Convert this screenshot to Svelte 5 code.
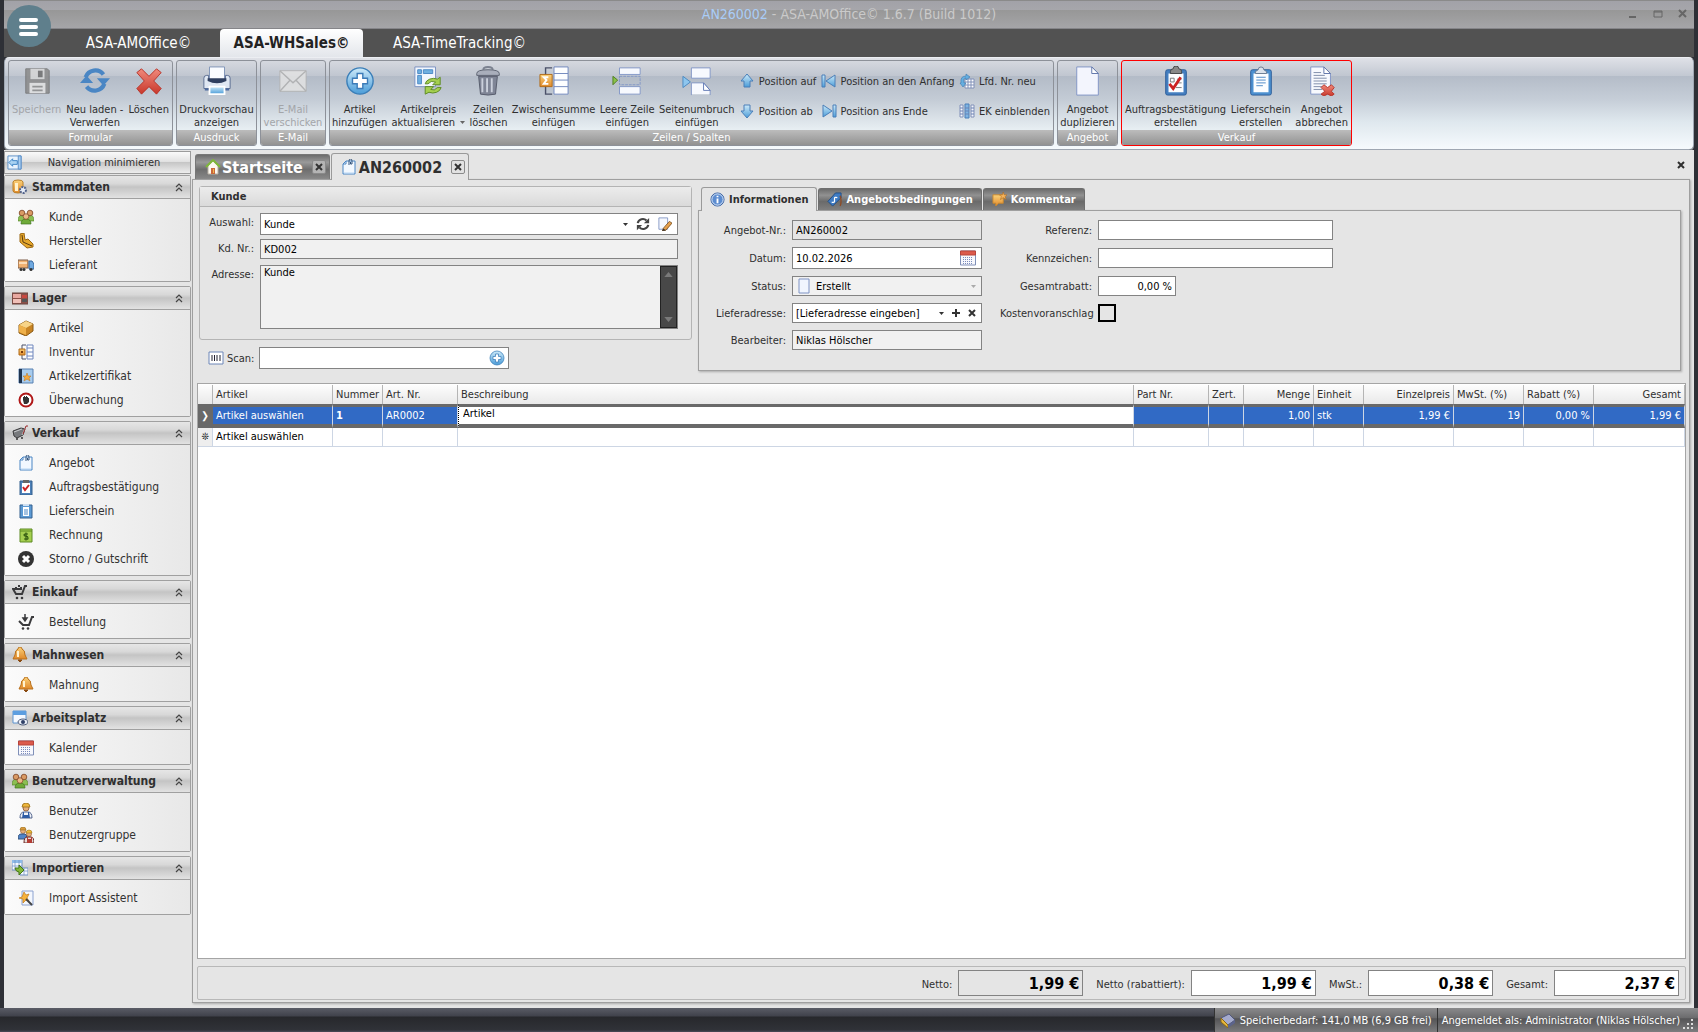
<script lang="ts">
	type RibbonButton = { icon: string; lines: string[]; disabled?: boolean; menu?: boolean };
	type Entry = { icon: string; label: string };

	/** Inhalt der 32er Symbole (Ribbon) */
	const large: Record<string, string> = {
		save: '<path d="M4 3h23l2 2v24H4z" fill="#8a8a8a" stroke="#707070"/><path d="M9 3h15v11H9z" fill="#d6d6d6"/><path d="M17 5h5v7h-5z" fill="#6d6d6d"/><path d="M8 18h17v11H8z" fill="#e2e2e2"/><path d="M11 22h11M11 26h11" stroke="#8c8c8c" stroke-width="2"/>',
		reload: '<path d="M6 12a11 11 0 0 1 19-3" fill="none" stroke="#4a86c4" stroke-width="4.500"/><path d="M26 19a11 11 0 0 1-19 3" fill="none" stroke="#4a86c4" stroke-width="4.500"/><path d="M18 13h14l-7 8zM14 18H0l7-8z" fill="#4a86c4"/>',
		delete: '<path d="M8 3l8 8 8-8 5 4-8 9 8 8-5 6-8-8-8 8-5-6 8-8-8-9z" fill="url(#red)" stroke="#b8332a" stroke-linejoin="round"/>',
		print: '<path d="M8 1h16v14H8z" fill="#fafcff" stroke="#7f93b8"/><path d="M2 13q0-3 3-3h2v5q9 5 18 0v-5h2q3 0 3 3v11H2z" fill="#dfe7f2" stroke="#5a6c90"/><path d="M6 13h20v3q-10 5-20 0z" fill="#2f3f5f"/><path d="M8 22h16v8H8z" fill="url(#blue)" stroke="#fff" stroke-width="2"/><path d="M3 25h4M25 25h4" stroke="#4c6aa0" stroke-width="2"/>',
		mail: '<path d="M2 5h28v22H2z" fill="#e3e3e3" stroke="#b0b0b0"/><path d="M2 5l14 13L30 5M2 27l11-12M30 27L19 15" fill="none" stroke="#b0b0b0" stroke-width="1.500"/>',
		add: '<circle cx="16" cy="16" r="14" fill="url(#blue)" stroke="#3c7fb8" stroke-width="1.500"/><path d="M13 8h6v5h5v6h-5v5h-6v-5H8v-6h5z" fill="#fff" stroke="#3c7cb8" stroke-width="1.500"/>',
		price: '<path d="M2 1h22v21H2z" fill="#f2f6fd" stroke="#7a90c0"/><path d="M5 4h4v4H5zM11 4h10v4H11zM5 10h4v9H5z" fill="#70b0e0" stroke="#4a88c4"/><path d="M13 19a9 7 0 0 1 13-5l3-2v8h-8l3-3q-5-2-8 2zM30 23a9 7 0 0 1-13 5l-4 2v-8h9l-3 3q4 2 7-2z" fill="#a5cf50" stroke="#5c8a22"/>',
		trash: '<path d="M11 4q0-3 5-3t5 3" fill="none" stroke="#7c8290" stroke-width="2"/><path d="M4 8q0-4 12-4t12 4v2H4z" fill="#a9aebb" stroke="#5c6270"/><path d="M6 11h20l-2 19q-8 2-16 0z" fill="#7f8596" stroke="#555b6b"/><path d="M10 13v15M15 13v15M20 13v15" stroke="#cbd0dc" stroke-width="2"/>',
		subtotal: '<path d="M14 2H7v28h7" fill="none" stroke="#4a5068" stroke-width="1.500"/><path d="M16 1h15v29H16z" fill="#fdfeff" stroke="#6f86bd"/><path d="M16 8h15M16 15h15M16 22h15" stroke="#6f86bd"/><path d="M1 9h13v13H1z" fill="url(#gold)" stroke="#b06a18"/><path d="M10 12H5l3 3-3 4h5" fill="none" stroke="#fff" stroke-width="2"/>',
		blankline: '<path d="M8 2h22v7H8zM8 22h22v8H8z" fill="#f7f9fe" stroke="#8296c6"/><path d="M8 11h22v9H8z" fill="none" stroke="#8296c6" stroke-dasharray="3 1"/><path d="M1 11l5 4-5 5z" fill="#8bc34a" stroke="#4f7d1f"/>',
		pagebreak: '<path d="M10 2h20v11H10z" fill="#f7f9fe" stroke="#8296c6"/><path d="M10 30V18h13l7 8v4z" fill="#f7f9fe"/><path d="M10 31V18h13l7 8v5" fill="none" stroke="#8296c6"/><path d="M23 18v8h7z" fill="#fff" stroke="#5f78b4"/><path d="M1 11l8 6-8 6z" fill="#8ec6ee" stroke="#4a88c0"/>',
		duplicate: '<path d="M4 1h16l7 7v23H4z" fill="#f3f5fd" stroke="#7f93c4"/><path d="M20 1v7h7z" fill="#fff" stroke="#5d72a8"/>',
		confirm: '<rect x="5" y="4" width="22" height="27" rx="2" fill="#457fc0" stroke="#2c5c97"/><path d="M8 8h16v20H8z" fill="#fcfdff"/><path d="M10 6q0-3 3-3 0-3 3-3t3 3q3 0 3 3v2H10z" fill="#888" stroke="#444"/><path d="M10 13h4v4h-4zM17 14h5M17 18h5M16 23h6" fill="none" stroke="#777"/><path d="M9 19l4 5 8-12" fill="none" stroke="#c22" stroke-width="3"/>',
		delivery: '<rect x="5" y="4" width="22" height="27" rx="2" fill="#4d90d0" stroke="#2c5c97"/><path d="M8 8h16v20H8z" fill="#fcfdff"/><path d="M10 6l3-2q0-3 3-3t3 3l3 2v2H10z" fill="#dce3ec" stroke="#6b7a90"/><path d="M11 12h10M11 15h10M11 18h10M11 21h7" stroke="#4a86c4"/>',
		cancel: '<path d="M4 1h14l7 7v22H4z" fill="#f7f9fe" stroke="#7f93c4"/><path d="M18 1v7h7z" fill="#fff" stroke="#5d72a8"/><path d="M7 7h8M7 10h12M7 13h14M7 16h14M7 19h14M7 22h9M7 25h9" stroke="#7c8aa8"/><path d="M18 20l4 3 4-3 3 3-3 4 3 3-3 2-4-2-4 2-3-2 4-3-4-4z" fill="url(#red)" stroke="#b8332a"/>'
	};

	/** Inhalt der 16er Symbole (Navigation, Felder, Reiter) */
	const small: Record<string, string> = {
		up: '<path d="M8 1l6 7h-3v6H5V8H2z" fill="url(#blue)" stroke="#4a7fb8"/>',
		down: '<path d="M8 15l6-7h-3V2H5v6H2z" fill="url(#blue)" stroke="#4a7fb8"/>',
		first: '<path d="M1 2h3v12H1zM14 2v12L5 8z" fill="url(#blue)" stroke="#4a7fb8"/>',
		last: '<path d="M12 2h3v12h-3zM2 2v12l9-6z" fill="url(#blue)" stroke="#4a7fb8"/>',
		renumber: '<path d="M6 6h9v9H6z" fill="#fff" stroke="#8090b8"/><path d="M6 9h9M6 12h9M9 6v9M12 6v9" stroke="#8090b8"/><path d="M2 10q-1-7 5-7V1l4 3-4 3V5q-3 0-2 5h2l-3 4-3-4z" fill="#65aee0" stroke="#3a78b0" stroke-width=".6"/>',
		columns: '<path d="M1 2h3v12H1zM12 2h3v12h-3z" fill="#f4f6fc" stroke="#8090b8"/><path d="M6 1h4v14H6z" fill="#7fb4e2" stroke="#4a7fb8"/><path d="M1 5h3M1 8h3M1 11h3M6 5h4M6 8h4M6 11h4M12 5h3M12 8h3M12 11h3" stroke="#6c83b4"/>',
		minimize: '<path d="M1 1h14v14H1z" fill="#e9f3fd" stroke="#5b8fc8"/><path d="M12 1h3v14h-3z" fill="#a7cdf0" stroke="#5b8fc8"/><path d="M2 8l4-4v2h5v4H6v2z" fill="#a9d2f2" stroke="#3b82c4"/>',
		master: '<path d="M1 3q0-2 5-2t5 2v9q0 2-5 2t-5-2z" fill="url(#gold)" stroke="#b8802a"/><path d="M3 4h3v8H3z" fill="#fff2cc"/><circle cx="11" cy="11" r="3" fill="#e7edf8" stroke="#53648c" stroke-width="2" stroke-dasharray="2 1"/>',
		people: '<path d="M0 12q0-6 4-6t4 6zM16 12q0-6-4-6t-4 6z" fill="#8cbf52" stroke="#4c7c24" stroke-width=".6"/><circle cx="4" cy="4" r="2.800" fill="#d99a64" stroke="#7c4424" stroke-width=".8"/><circle cx="12" cy="4" r="2.800" fill="#d99a64" stroke="#7c4424" stroke-width=".8"/><path d="M3 15q0-5 5-5t5 5z" fill="#6faa38" stroke="#3f7420" stroke-width=".7"/><circle cx="8" cy="7.500" r="2.800" fill="#eab888" stroke="#8c4c2c" stroke-width=".8"/>',
		maker: '<path d="M2 1l4-1 1 7 3-1 5 5v3l-6 1L2 9z" fill="#e6a82c" stroke="#9a6612"/><path d="M4 2l1 7 9 4" stroke="#5c3c10" fill="none"/>',
		truck: '<path d="M0 3h10v8H0z" fill="#f0b070" stroke="#7c5c48"/><path d="M1 5h8v2H1z" fill="#fbdcb8"/><path d="M11 4h3l2 3v5h-5z" fill="#6fa9e0" stroke="#37679c"/><circle cx="3" cy="12.500" r="1.500" fill="#333"/><circle cx="6" cy="12.500" r="1.500" fill="#333"/><circle cx="13" cy="12.500" r="1.500" fill="#333"/>',
		store: '<path d="M0 3h16v11H0z" fill="#8c5048" stroke="#6c4640"/><path d="M1 4h8v4H1z" fill="#e8a8a0"/><path d="M1 9h8v4H1z" fill="#f0c0b8"/><path d="M10 5h5v3h-5z" fill="#c84840"/><path d="M10 9h5v3h-5z" fill="#555"/>',
		box: '<path d="M1 5l7-4 7 3v7l-7 5-7-3z" fill="#c88424" stroke="#8a5a14"/><path d="M1 5l7-4 7 3-7 4z" fill="#f7d488"/><path d="M8 8v7l-7-3V5z" fill="#eeb04a"/>',
		stock: '<path d="M8 1H4v14h4" fill="none" stroke="#4a5068"/><path d="M9 1h6v14H9z" fill="#fff" stroke="#6f86bd"/><path d="M9 4h6M9 8h6M9 12h6" stroke="#6f86bd"/><path d="M1 5h6v6H1z" fill="url(#gold)" stroke="#b06a18"/><path d="M3 7l2 2M5 7L3 9" stroke="#7a3a08"/>',
		cert: '<path d="M1 1h14v14H1z" fill="#a8ccee" stroke="#5880b0"/><path d="M1 1h3v14H1z" fill="#1f3450"/><path d="M9 5l1 3h3l-2 2 1 3-3-2-3 2 1-3-2-2h3z" fill="#f5a83c" stroke="#b87014" stroke-width=".5"/>',
		watch: '<circle cx="8" cy="8" r="6.500" fill="#fff" stroke="#b01818" stroke-width="2"/><path d="M5 8V5h1V4h1v1h1V4h1v1h1v1h1v4l-2 2H6z" fill="#333"/>',
		cart: '<path d="M1 6l8-3 4 1-2 6-6 3-3-2z" fill="#77797c" stroke="#3c3c3e"/><path d="M2 7l8-3M10 10l4-9 2 1" stroke="#c8cacc" fill="none"/><path d="M11 9l3-8h2" stroke="#a03030" fill="none"/><circle cx="5" cy="14" r="1" fill="#333"/><circle cx="10" cy="13" r="1" fill="#333"/>',
		offer: '<path d="M2 5l3-3h9v13H2z" fill="#f2f8ff" stroke="#4a86c4"/><path d="M2 5h3V2" fill="none" stroke="#4a86c4"/><path d="M3 14h10" stroke="#b9d7f3"/><path d="M8 6V2q0-2 1.500-2T11 2v3H9.500V3" fill="none" stroke="#34557c"/>',
		order: '<path d="M2 2h12v14H2z" fill="#4d80b8" stroke="#34608f"/><path d="M4 4h8v10H4z" fill="#fff"/><path d="M5 1h6v3H5z" fill="#666"/><path d="M5 8l2 3 4-5" fill="none" stroke="#c22" stroke-width="2"/>',
		note: '<path d="M2 2h12v13H2z" fill="#5c9ad4" stroke="#34608f"/><path d="M5 4h6v9H5z" fill="#fff"/><path d="M5 1h6v2H5z" fill="#cfe0f2"/><path d="M6 7h4M6 9h4M6 11h4" stroke="#4a86c4"/>',
		invoice: '<path d="M2 2h12v13H2z" fill="#a5cf50" stroke="#5c8a22"/><path d="M2 4h12" stroke="#5c8a22"/><path d="M10 7H7q-1 0-1 1t2 1.200T10 11 9 12H6M8 5.500v8" fill="none" stroke="#2f5510" stroke-width="1.200"/>',
		storno: '<circle cx="8" cy="8" r="8" fill="#333"/><path d="M5 5l6 6M11 5l-6 6" stroke="#fff" stroke-width="3"/>',
		buy: '<path d="M15 2h-2l-3 8H4L1 5h9" fill="none" stroke="#3a3a3c" stroke-width="2"/><path d="M3 3h2v2H3zM6 1h2v2H6zM8 3h2v2H8z" fill="#3a3a3c"/><circle cx="5" cy="14" r="1.300" fill="#3a3a3c"/><circle cx="10" cy="14" r="1.300" fill="#3a3a3c"/>',
		purchase: '<path d="M16 3h-2l-3 8H5L1 7" fill="none" stroke="#3a3a3c" stroke-width="2"/><path d="M7 0v5M5 4l2 3 2-3z" fill="#3a3a3c" stroke="#3a3a3c" stroke-width="1.500"/><circle cx="5" cy="14.500" r="1.300" fill="#3a3a3c"/><circle cx="10" cy="14.500" r="1.300" fill="#3a3a3c"/>',
		bell: '<path d="M8 0q2 0 2 2 3 1 3 6l2 4H1l2-4q0-5 3-6 0-2 2-2z" fill="url(#gold)" stroke="#b8701c"/><path d="M6 13h4l-2 2z" fill="#8a4a10" stroke="#8a4a10"/><path d="M6 4v6" stroke="#fff3cf" stroke-width="2"/>',
		desk: '<path d="M1 1h13v12H1z" fill="#f5f9ff" stroke="#5c94d0"/><path d="M1 1h13v4H1z" fill="#5c9ee0"/><ellipse cx="11" cy="12" rx="5" ry="3" fill="#e8edf6" stroke="#4c5a78"/><circle cx="11" cy="12" r="2" fill="#2f3f66"/>',
		calendar: '<path d="M.5 1h15v14H.5z" fill="#f7f8fd" stroke="#8090b8"/><path d="M.5 1h15v4H.5z" fill="#dc5a4c" stroke="#b8443a"/><path d="M3 7.500h10M3 9.500h10M3 11.500h10M3 13.500h10" stroke="#7c8cbc" stroke-dasharray="1 1"/>',
		user: '<circle cx="8" cy="5" r="3" fill="#e6b07c" stroke="#8c562c" stroke-width=".8"/><path d="M4 4q0-4 4-4t4 4z" fill="#edb53c" stroke="#99701c" stroke-width=".8"/><path d="M2 15q0-6 4-6h4q4 0 4 6z" fill="#f1f4fa" stroke="#53648c"/><path d="M5 9h1v3h4V9h1l1 6H4z" fill="#2f5ca4"/>',
		group: '<circle cx="5" cy="4" r="2.500" fill="#e6b07c" stroke="#8c562c" stroke-width=".6"/><path d="M2 3q0-3 3-3t3 3z" fill="#d8983c" stroke="#99701c" stroke-width=".6"/><path d="M0 12q0-5 3-5h4q2 0 2 5z" fill="#4f84c8" stroke="#34527c"/><circle cx="11" cy="7" r="2.500" fill="#e6b07c" stroke="#8c562c" stroke-width=".6"/><path d="M8 6q0-3 3-3t3 3z" fill="#f0bc34" stroke="#99701c" stroke-width=".6"/><path d="M6 16q0-6 3-6h4q3 0 3 6z" fill="#e4dcd8" stroke="#6c2420"/><path d="M9 10h1v2h3v-2h1v6H9z" fill="#b43c34"/>',
		importing: '<path d="M0 0h10v10H0zM8 8h8v7H8z" fill="#f4f8fe" stroke="#7090c0"/><path d="M0 0h10v3H0z" fill="#8fbce8"/><path d="M0 6h10M3 0v10M7 0v10M8 11h8M12 8v7" stroke="#7090c0" stroke-width=".7"/><path d="M3 8h4V5l5 5-5 5v-3q-3 0-4-4z" fill="#83b838" stroke="#44761a"/>',
		wizard: '<path d="M4 1h11v14H4z" fill="#f4f7fd" stroke="#8ca2d0"/><path d="M6 2l2 3 3-1-2 4 2 3-3-1-3 3v-4L1 8l3-1z" fill="#f7b23c" stroke="#c07a18" stroke-width=".7"/><path d="M8 9l6 6" stroke="#444" stroke-width="2"/>',
		home: '<path d="M3 7l5-5 5 5v8H3z" fill="#fcf8f0" stroke="#b8b0a4"/><path d="M1 8l7-7 7 7" fill="none" stroke="#7eb83a" stroke-width="2"/><path d="M6 9h4v6H6z" fill="#c8683c"/><path d="M8 10h1v4H8z" fill="#f3b84c"/>',
		info: '<circle cx="8" cy="8" r="7" fill="#5c8cd0" stroke="#3c62a0"/><circle cx="8" cy="8" r="6" fill="none" stroke="#dbe7f8"/><path d="M8 7v5M8 4v1.500" stroke="#fff" stroke-width="2"/>',
		terms: '<path d="M1 10l8-9h6v5l-9 9z" fill="#3f7cc4" stroke="#1f4c84"/><path d="M11 6q-3-1-3 1t0 3-3 1" stroke="#fff" fill="none" stroke-width="1.300"/><path d="M14 4q2 6 0 11" stroke="#8c4c28" fill="none" stroke-width="1.500"/>',
		comment: '<path d="M1 3h11v9H7l-3 3v-3H1z" fill="url(#gold)" stroke="#c88830"/><path d="M12 0l1 3h3l-2 2 1 3-3-2-3 2 1-3-2-2h3z" fill="#f6b45c" stroke="#a86820" stroke-width=".6"/>',
		refresh: '<path d="M2 7a6 6 0 0 1 10-3M14 9a6 6 0 0 1-10 3" fill="none" stroke="#444" stroke-width="2.500"/><path d="M15 1v6H9zM1 15V9h6z" fill="#444"/>',
		edit: '<path d="M1 1h10v13H1z" fill="#f4f7fd" stroke="#7f93c4"/><path d="M6 13l7-8 3 2-7 8-4 1z" fill="#e6a04c" stroke="#7c5020"/><path d="M5 16l1-3 3 2z" fill="#333"/>',
		barcode: '<path d="M1 2h14v12H1z" fill="#fff" stroke="#6c86b8"/><path d="M4 5v6M6.500 5v6M9 5v6M12 5v6" stroke="#223"/>',
		page: '<path d="M3 1h10v14H3z" fill="#f0f5fe" stroke="#7f93c4"/>',
		memory: '<path d="M1 6l8-4 6 6-7 5z" fill="#a4aacc" stroke="#50587c"/><path d="M1 6v4l7 6v-3z" fill="#e8b83c" stroke="#8a6a18"/><path d="M8 13v3l7-5V8z" fill="#5c648c"/>'
	};

	const modules = ['ASA-AMOffice©', 'ASA-WHSales©', 'ASA-TimeTracking©'];

	const groups: { name: string; cls: string; buttons: RibbonButton[] }[] = [
		{
			name: 'Formular',
			cls: 'w-form',
			buttons: [
				{ icon: 'save', lines: ['Speichern'], disabled: true },
				{ icon: 'reload', lines: ['Neu laden -', 'Verwerfen'] },
				{ icon: 'delete', lines: ['Löschen'] }
			]
		},
		{ name: 'Ausdruck', cls: 'w-print', buttons: [{ icon: 'print', lines: ['Druckvorschau', 'anzeigen'] }] },
		{ name: 'E-Mail', cls: 'w-mail', buttons: [{ icon: 'mail', lines: ['E-Mail', 'verschicken'], disabled: true }] },
		{
			name: 'Zeilen / Spalten',
			cls: 'w-rows',
			buttons: [
				{ icon: 'add', lines: ['Artikel', 'hinzufügen'] },
				{ icon: 'price', lines: ['Artikelpreis', 'aktualisieren'], menu: true },
				{ icon: 'trash', lines: ['Zeilen', 'löschen'] },
				{ icon: 'subtotal', lines: ['Zwischensumme', 'einfügen'] },
				{ icon: 'blankline', lines: ['Leere Zeile', 'einfügen'] },
				{ icon: 'pagebreak', lines: ['Seitenumbruch', 'einfügen'] }
			]
		},
		{ name: 'Angebot', cls: 'w-offer', buttons: [{ icon: 'duplicate', lines: ['Angebot', 'duplizieren'] }] },
		{
			name: 'Verkauf',
			cls: 'w-sale',
			buttons: [
				{ icon: 'confirm', lines: ['Auftragsbestätigung', 'erstellen'] },
				{ icon: 'delivery', lines: ['Lieferschein', 'erstellen'] },
				{ icon: 'cancel', lines: ['Angebot', 'abbrechen'] }
			]
		}
	];

	const rowTools: Entry[][] = [
		[
			{ icon: 'up', label: 'Position auf' },
			{ icon: 'down', label: 'Position ab' }
		],
		[
			{ icon: 'first', label: 'Position an den Anfang' },
			{ icon: 'last', label: 'Position ans Ende' }
		],
		[
			{ icon: 'renumber', label: 'Lfd. Nr. neu' },
			{ icon: 'columns', label: 'EK einblenden' }
		]
	];

	const nav: { title: string; icon: string; items: Entry[] }[] = [
		{
			title: 'Stammdaten',
			icon: 'master',
			items: [
				{ icon: 'people', label: 'Kunde' },
				{ icon: 'maker', label: 'Hersteller' },
				{ icon: 'truck', label: 'Lieferant' }
			]
		},
		{
			title: 'Lager',
			icon: 'store',
			items: [
				{ icon: 'box', label: 'Artikel' },
				{ icon: 'stock', label: 'Inventur' },
				{ icon: 'cert', label: 'Artikelzertifikat' },
				{ icon: 'watch', label: 'Überwachung' }
			]
		},
		{
			title: 'Verkauf',
			icon: 'cart',
			items: [
				{ icon: 'offer', label: 'Angebot' },
				{ icon: 'order', label: 'Auftragsbestätigung' },
				{ icon: 'note', label: 'Lieferschein' },
				{ icon: 'invoice', label: 'Rechnung' },
				{ icon: 'storno', label: 'Storno / Gutschrift' }
			]
		},
		{ title: 'Einkauf', icon: 'buy', items: [{ icon: 'purchase', label: 'Bestellung' }] },
		{ title: 'Mahnwesen', icon: 'bell', items: [{ icon: 'bell', label: 'Mahnung' }] },
		{ title: 'Arbeitsplatz', icon: 'desk', items: [{ icon: 'calendar', label: 'Kalender' }] },
		{
			title: 'Benutzerverwaltung',
			icon: 'people',
			items: [
				{ icon: 'user', label: 'Benutzer' },
				{ icon: 'group', label: 'Benutzergruppe' }
			]
		},
		{ title: 'Importieren', icon: 'importing', items: [{ icon: 'wizard', label: 'Import Assistent' }] }
	];

	const infoTabs: Entry[] = [
		{ icon: 'info', label: 'Informationen' },
		{ icon: 'terms', label: 'Angebotsbedingungen' },
		{ icon: 'comment', label: 'Kommentar' }
	];

	/** Spalten der Positionstabelle; width 0 = restliche Breite */
	const columns = [
		{ title: 'Artikel', width: 120, value: 'Artikel auswählen' },
		{ title: 'Nummer', width: 50, value: '1', strong: true, headRight: true },
		{ title: 'Art. Nr.', width: 75, value: 'AR0002' },
		{ title: 'Beschreibung', width: 0, value: 'Artikel', edit: true },
		{ title: 'Part Nr.', width: 75, value: '' },
		{ title: 'Zert.', width: 35, value: '' },
		{ title: 'Menge', width: 70, value: '1,00', right: true, headRight: true },
		{ title: 'Einheit', width: 50, value: 'stk' },
		{ title: 'Einzelpreis', width: 90, value: '1,99 €', right: true, headRight: true },
		{ title: 'MwSt. (%)', width: 70, value: '19', right: true },
		{ title: 'Rabatt (%)', width: 70, value: '0,00 %', right: true },
		{ title: 'Gesamt', width: 91, value: '1,99 €', right: true, headRight: true }
	];

	const totals = [
		{ id: 'netto', label: 'Netto:', value: '1,99 €', readonly: true },
		{ id: 'nettorab', label: 'Netto (rabattiert):', value: '1,99 €' },
		{ id: 'mwst', label: 'MwSt.:', value: '0,38 €' },
		{ id: 'gesamt', label: 'Gesamt:', value: '2,37 €' }
	];

	let activeModule = $state(1);
	let activeInfo = $state(0);
	let closed: Record<string, boolean> = $state({});
</script>

{#snippet icon16(name: string)}
	<svg class="i16" viewBox="0 0 16 16" aria-hidden="true">{@html small[name]}</svg>
{/snippet}

{#snippet arrow()}
	<svg class="arrow" viewBox="0 0 5 3" aria-hidden="true"><path d="M0 0h5L2.500 3z" fill="currentColor" /></svg>
{/snippet}

{#snippet cross()}
	<svg class="cross" viewBox="0 0 8 8" aria-hidden="true"><path d="M1 1l6 6M7 1L1 7" stroke="currentColor" stroke-width="2" /></svg>
{/snippet}

<svg class="defs" aria-hidden="true">
	<defs>
		<linearGradient id="blue" x1="0" y1="0" x2="0" y2="1">
			<stop offset="0" stop-color="#cdeaf9" />
			<stop offset="1" stop-color="#4a9cd8" />
		</linearGradient>
		<linearGradient id="red" x1="0" y1="0" x2="0" y2="1">
			<stop offset="0" stop-color="#f08a7c" />
			<stop offset="1" stop-color="#c8382c" />
		</linearGradient>
		<linearGradient id="gold" x1="0" y1="0" x2="0" y2="1">
			<stop offset="0" stop-color="#fbd27a" />
			<stop offset="1" stop-color="#e0892a" />
		</linearGradient>
	</defs>
</svg>

<div class="window">
	<header class="titlebar">
		<button class="burger" aria-label="Menü">
			<svg viewBox="0 0 44 44" aria-hidden="true">
				<path d="M14 15h15M14 22h15M14 29h15" stroke="#fff" stroke-width="4" stroke-linecap="round" />
			</svg>
		</button>
		<h1><span>AN260002</span> - ASA-AMOffice© 1.6.7 (Build 1012)</h1>
		<div class="winbuttons">
			<button aria-label="Minimieren"><svg viewBox="0 0 10 10"><path d="M1 8h7" stroke="#666" stroke-width="2" /></svg></button>
			<button aria-label="Maximieren"><svg viewBox="0 0 10 10"><path d="M1 2h8v6H1zM1 3h8" fill="none" stroke="#666" /></svg></button>
			<button aria-label="Schließen"><svg viewBox="0 0 10 10"><path d="M1 1l7 7M8 1L1 8" stroke="#666" stroke-width="2" /></svg></button>
		</div>
	</header>

	<nav class="modules">
		{#each modules as name, i}
			<button class:active={activeModule === i} onclick={() => (activeModule = i)}>{name}</button>
		{/each}
	</nav>

	<div class="ribbon">
		{#each groups as g}
			<section class="rgroup {g.cls}">
				<div class="rbody">
					{#each g.buttons as b}
						<button class="rbtn" disabled={b.disabled}>
							<svg class="i32" class:dim={b.disabled} viewBox="0 0 32 32" aria-hidden="true">{@html large[b.icon]}</svg>
							{#each b.lines as line, i}
								<span>{line}{#if b.menu && i === 1}<i>{@render arrow()}</i>{/if}</span>
							{/each}
						</button>
					{/each}
					{#if g.cls === 'w-rows'}
						{#each rowTools as col}
							<div class="tools">
								{#each col as t}
									<button class="tool">{@render icon16(t.icon)}{t.label}</button>
								{/each}
							</div>
						{/each}
					{/if}
				</div>
				<div class="rname">{g.name}</div>
			</section>
		{/each}
	</div>

	<div class="body">
		<aside class="side">
			<button class="minimize">{@render icon16('minimize')}<span>Navigation minimieren</span></button>
			{#each nav as g}
				<section class="ngroup">
					<button class="nhead" aria-expanded={!closed[g.title]} onclick={() => (closed[g.title] = !closed[g.title])}>
						{@render icon16(g.icon)}
						<span>{g.title}</span>
						<svg class="chev" viewBox="0 0 8 9" aria-hidden="true">
							<path d="M1 4l3-3 3 3M1 8l3-3 3 3" fill="none" stroke="#444" stroke-width="1.200" />
						</svg>
					</button>
					{#if !closed[g.title]}
						<ul>
							{#each g.items as item}
								<li><a href="#{item.label}">{@render icon16(item.icon)}<span>{item.label}</span></a></li>
							{/each}
						</ul>
					{/if}
				</section>
			{/each}
		</aside>

		<main class="main">
			<div class="doctabs">
				<div class="doctab">
					<button class="tabname">{@render icon16('home')}Startseite</button>
					<button class="tabclose" aria-label="Startseite schließen">{@render cross()}</button>
				</div>
				<div class="doctab active">
					<button class="tabname">{@render icon16('offer')}AN260002</button>
					<button class="tabclose" aria-label="AN260002 schließen">{@render cross()}</button>
				</div>
				<button class="closeall" aria-label="Schließen">{@render cross()}</button>
			</div>

			<div class="doc">
				<div class="forms">
					<div class="left">
						<section class="kunde">
							<h2>Kunde</h2>
							<div class="krow tall">
								<label for="auswahl">Auswahl:</label>
								<div class="field">
									<input id="auswahl" value="Kunde" />
									<button aria-label="Öffnen">{@render arrow()}</button>
									<button aria-label="Aktualisieren">{@render icon16('refresh')}</button>
									<button aria-label="Bearbeiten">{@render icon16('edit')}</button>
								</div>
							</div>
							<div class="krow">
								<label for="kdnr">Kd. Nr.:</label>
								<div class="field ro"><input id="kdnr" value="KD002" readonly /></div>
							</div>
							<div class="krow area">
								<label for="adresse">Adresse:</label>
								<div class="field ro">
									<textarea id="adresse" readonly value="Kunde"></textarea>
									<div class="scroll"><i class="flip">{@render arrow()}</i><i>{@render arrow()}</i></div>
								</div>
							</div>
						</section>
						<div class="scan">
							<label for="scan">{@render icon16('barcode')}Scan:</label>
							<div class="field">
								<input id="scan" />
								<button aria-label="Hinzufügen"><svg class="i16" viewBox="0 0 32 32">{@html large.add}</svg></button>
							</div>
						</div>
					</div>

					<div class="right">
						<div class="infotabs">
							{#each infoTabs as t, i}
								<button class:active={activeInfo === i} onclick={() => (activeInfo = i)}>{@render icon16(t.icon)}{t.label}</button>
							{/each}
						</div>
						<div class="info">
							<div class="infocol">
								<label for="nr">Angebot-Nr.:</label>
								<div class="field grey"><input id="nr" value="AN260002" readonly /></div>
								<label for="datum">Datum:</label>
								<div class="field high">
									<input id="datum" value="10.02.2026" />
									<button aria-label="Kalender">{@render icon16('calendar')}</button>
								</div>
								<label for="status">Status:</label>
								<div class="field ro status">
									{@render icon16('page')}
									<select id="status" disabled><option>Erstellt</option></select>
									<span class="pale">{@render arrow()}</span>
								</div>
								<label for="liefer">Lieferadresse:</label>
								<div class="field">
									<input id="liefer" value="[Lieferadresse eingeben]" />
									<button aria-label="Öffnen">{@render arrow()}</button>
									<button aria-label="Neu">
										<svg class="cross" viewBox="0 0 8 8"><path d="M4 0v8M0 4h8" stroke="currentColor" stroke-width="2" /></svg>
									</button>
									<button aria-label="Entfernen">{@render cross()}</button>
								</div>
								<label for="bearb">Bearbeiter:</label>
								<div class="field ro"><input id="bearb" value="Niklas Hölscher" readonly /></div>
							</div>
							<div class="infocol second">
								<label for="ref">Referenz:</label>
								<div class="field"><input id="ref" /></div>
								<label for="kenn">Kennzeichen:</label>
								<div class="field"><input id="kenn" /></div>
								<label for="rabatt">Gesamtrabatt:</label>
								<div class="field short"><input id="rabatt" value="0,00 %" /></div>
								<label for="kva">Kostenvoranschlag</label>
								<input id="kva" class="check" type="checkbox" />
							</div>
						</div>
					</div>
				</div>

				<div class="grid">
					<table>
						<colgroup>
							<col class="mark" />
							{#each columns as c}
								<col style:width={c.width ? `${c.width}px` : 'auto'} />
							{/each}
						</colgroup>
						<thead>
							<tr>
								<th aria-label="Markierung"></th>
								{#each columns as c}
									<th class:r={c.headRight}>{c.title}</th>
								{/each}
							</tr>
						</thead>
						<tbody>
							<tr class="sel">
								<td class="mark">❯</td>
								{#each columns as c}
									<td class:r={c.right} class:b={c.strong} class:edit={c.edit}>
										{#if c.edit}<input aria-label={c.title} value={c.value} />{:else}{c.value}{/if}
									</td>
								{/each}
							</tr>
							<tr class="new">
								<td class="mark">❊</td>
								{#each columns as c, i}
									<td>{i === 0 ? 'Artikel auswählen' : ''}</td>
								{/each}
							</tr>
						</tbody>
					</table>
				</div>

				<div class="totals">
					{#each totals as t}
						<label for={t.id}>{t.label}</label>
						<input id={t.id} class:grey={t.readonly} value={t.value} readonly />
					{/each}
				</div>
			</div>
		</main>
	</div>

	<footer class="status-bar">
		<div>{@render icon16('memory')}Speicherbedarf: 141,0 MB (6,9 GB frei)</div>
		<div class="login">
			Angemeldet als: Administrator (Niklas Hölscher)
			<svg class="grip" viewBox="0 0 12 12" aria-hidden="true">
				<path d="M9 1h2v2H9zM5 5h2v2H5zM9 5h2v2H9zM1 9h2v2H1zM5 9h2v2H5zM9 9h2v2H9z" fill="#ddd" />
			</svg>
		</div>
	</footer>
</div>

<style>
	:global(body) {
		margin: 0;
		background: #2e3036;
	}
	.defs {
		position: absolute;
		width: 0;
		height: 0;
	}
	.window {
		display: flex;
		flex-direction: column;
		min-height: 100vh;
		box-sizing: border-box;
		font-family: 'DejaVu Sans Condensed', 'DejaVu Sans', sans-serif;
		font-size: 11px;
		color: #2f2f2f;
	}
	.window * {
		box-sizing: border-box;
	}
	button,
	input,
	textarea,
	select {
		font: inherit;
		color: inherit;
		margin: 0;
		padding: 0;
		border: 0;
		background: none;
		min-width: 0;
		outline: none;
	}
	svg {
		display: block;
		flex: none;
	}
	.i16 {
		width: 16px;
		height: 16px;
	}
	.i32 {
		width: 30px;
		height: 30px;
	}
	.arrow {
		width: 5px;
		height: 3px;
	}
	.cross {
		width: 8px;
		height: 8px;
	}

	/* Titelleiste */
	.titlebar {
		position: relative;
		display: flex;
		align-items: center;
		justify-content: center;
		height: 29px;
		margin: 0 4px;
		padding-bottom: 2px;
		background: linear-gradient(#a2a2a8, #a6a6ab 9px, #979797 9px, #a5a5a8 27px);
		border-top: 1px solid #8a8a8a;
		border-bottom: 1px solid #858589;
	}
	h1 {
		margin: 0;
		font-size: 14px;
		font-weight: 400;
		color: #cacaca;
	}
	h1 span {
		color: #a9cdf8;
	}
	.burger {
		position: absolute;
		z-index: 2;
		left: 3px;
		top: 4px;
		width: 44px;
		height: 42px;
		border-radius: 50%;
		background: #5f7f8c;
	}
	.winbuttons {
		position: absolute;
		right: 6px;
		display: flex;
		gap: 15px;
	}
	.winbuttons svg {
		width: 10px;
		height: 10px;
	}

	/* Modulreiter */
	.modules {
		display: flex;
		height: 28px;
		margin: 0 4px;
		padding-left: 53px;
		background: #525252;
		color: #fff;
		font-size: 15px;
	}
	.modules button {
		flex: none;
		width: 163px;
	}
	.modules .active {
		width: 143px;
		background: linear-gradient(#fff, #e3e6eb);
		border-radius: 4px 4px 0 0;
		color: #222;
		font-weight: 700;
	}
	.modules .active + button {
		width: 193px;
	}

	/* Ribbon */
	.ribbon {
		display: flex;
		gap: 3px;
		height: 93px;
		margin: 0 4px;
		padding: 2px 3px 3px;
		border: 1px solid #9fa7b2;
		border-top-color: #eceef2;
		border-radius: 5px;
		background: linear-gradient(#dfe1e7, #c2c8d2 18px, #b4bcc8 18px, #c6ced8 42px, #dfe8ee 64px, #f6fafd);
		box-shadow: 0 1px 0 #8d8d8d;
	}
	.rgroup {
		display: flex;
		flex-direction: column;
		flex: none;
		border: 1px solid #8d9199;
		border-radius: 3px;
		overflow: hidden;
		background: linear-gradient(#d5d8df, #c0c6d0 15px, #b3bbc7 15px, #c3cbd5 38px, #e9f0f4 70px);
	}
	.w-form {
		width: 165px;
	}
	.w-print {
		width: 81px;
	}
	.w-mail {
		width: 66px;
	}
	.w-rows {
		width: 725px;
	}
	.w-offer {
		width: 61px;
	}
	.w-sale {
		width: 231px;
		border-color: #f00;
	}
	.rbody {
		display: flex;
		flex: 1;
		justify-content: space-between;
		padding: 5px 3px 0;
	}
	.w-rows .rbody {
		padding-left: 2px;
	}
	.w-print .rbody,
	.w-mail .rbody,
	.w-offer .rbody {
		justify-content: center;
	}
	.rbtn {
		display: flex;
		flex-direction: column;
		align-items: center;
		line-height: 13px;
		white-space: nowrap;
	}
	.rbtn .i32 {
		margin-bottom: 7px;
	}
	.rbtn span {
		display: flex;
		align-items: center;
	}
	.rbtn i {
		margin-left: 5px;
		color: #666;
	}
	.rbtn:disabled {
		color: #a3a5a9;
	}
	.dim {
		opacity: 0.85;
	}
	.tools {
		display: flex;
		flex-direction: column;
		gap: 14px;
		padding-top: 7px;
	}
	.tool {
		display: flex;
		align-items: center;
		gap: 4px;
		white-space: nowrap;
	}
	.rname {
		height: 15px;
		line-height: 15px;
		text-align: center;
		color: #fff;
		background: linear-gradient(#bcbcbc, #929292);
	}

	/* Navigation */
	.body {
		display: flex;
		flex: 1;
		margin: 0 4px;
		background: #e5e5e5;
	}
	.side {
		width: 187px;
		flex: none;
		padding-top: 1px;
	}
	.minimize {
		display: flex;
		align-items: center;
		width: 100%;
		height: 23px;
		padding: 0 4px 0 2px;
		border: 1px solid #9b9b9b;
		background: linear-gradient(#fafafa, #e2e2e2 45%, #c6c6c6 50%, #ededed);
	}
	.minimize span {
		flex: 1;
	}
	.minimize .i16 {
		width: 15px;
		height: 15px;
	}
	.ngroup {
		margin: 1px 0 4px;
		border: 1px solid #a0a0a0;
		border-radius: 2px;
	}
	.ngroup + .ngroup {
		margin-top: 0;
	}
	.nhead {
		display: flex;
		align-items: center;
		gap: 4px;
		width: 100%;
		height: 23px;
		padding: 0 7px;
		border-bottom: 1px solid #a0a0a0;
		background: linear-gradient(#e6e6e6, #d8d8d8 35%, #c4c4c4 50%, #e2e2e2);
		font-size: 12px;
		font-weight: 700;
	}
	.nhead span {
		flex: 1;
		text-align: left;
	}
	.chev {
		width: 8px;
		height: 9px;
	}
	ul {
		margin: 0;
		padding: 6px 0 4px;
		list-style: none;
		background: linear-gradient(90deg, #fbfbfb, #e8e8e8);
	}
	li a {
		display: flex;
		align-items: center;
		gap: 15px;
		height: 24px;
		padding-left: 13px;
		color: #333;
		font-size: 12px;
		text-decoration: none;
	}

	/* Dokumentreiter */
	.main {
		display: flex;
		flex-direction: column;
		flex: 1;
		min-width: 0;
		margin: 3px 4px 5px 1px;
	}
	.doctabs {
		display: flex;
		align-items: flex-end;
		height: 26px;
		padding-left: 3px;
	}
	.doctab {
		display: flex;
		align-items: center;
		gap: 9px;
		height: 25px;
		padding: 0 3px 0 9px;
		border: 1px solid #777;
		border-bottom: 0;
		border-radius: 3px 3px 0 0;
		background: linear-gradient(#6c6c6c, #9a9a9a 30%, #6e6e6e 60%, #888);
		color: #fff;
	}
	.doctab.active {
		position: relative;
		height: 27px;
		margin: 0 0 -1px 1px;
		border-color: #9a9a9a;
		background: #e5e5e5;
		color: #2f2f2f;
	}
	.tabname {
		display: flex;
		align-items: center;
		gap: 1px;
		font-size: 16px;
		font-weight: 700;
	}
	.active .tabname {
		gap: 2px;
	}
	.tabclose {
		display: grid;
		place-items: center;
		width: 14px;
		height: 14px;
		border: 1px solid #8a8a8a;
		border-radius: 2px;
		background: #b4b4b4;
		color: #333;
	}
	.active .tabclose {
		background: #e2e2e2;
	}
	.closeall {
		margin: 0 5px 10px auto;
	}
	.doc {
		display: flex;
		flex-direction: column;
		flex: 1;
		padding: 6px 3px 2px 4px;
		border: 1px solid #9f9f9f;
		box-shadow: 1px 1px 2px #aaa;
	}
	.forms {
		display: flex;
		gap: 6px;
		margin-left: 2px;
	}
	.left {
		width: 493px;
		flex: none;
	}
	.kunde {
		height: 154px;
		border: 1px solid #b4b4b4;
		border-radius: 3px;
	}
	h2 {
		margin: 0 0 6px;
		padding-left: 11px;
		height: 20px;
		line-height: 20px;
		font-size: 11px;
		border-bottom: 1px solid #b4b4b4;
		background: linear-gradient(#ececec, #dadada);
	}
	.krow,
	.scan {
		display: flex;
		margin-bottom: 4px;
		padding-right: 13px;
	}
	.krow label {
		width: 54px;
		margin-right: 6px;
		line-height: 20px;
		text-align: right;
		flex: none;
	}
	.field {
		display: flex;
		align-items: center;
		flex: 1;
		height: 20px;
		padding: 0 1px 0 3px;
		border: 1px solid #838383;
		background: #fff;
		color: #000;
	}
	.field input {
		flex: 1;
		height: 100%;
	}
	.field button {
		padding: 0 4px;
		color: #333;
	}
	.krow.tall .field,
	.field.high {
		height: 22px;
	}
	.krow.tall .i16 {
		width: 14px;
		height: 14px;
	}
	.field.ro {
		background: #f1f1f1;
	}
	.field.grey {
		background: #e5e5e5;
	}
	.krow.area {
		margin-top: 6px;
	}
	.area .field {
		height: 64px;
		padding: 0 0 0 3px;
	}
	textarea {
		flex: 1;
		height: 100%;
		resize: none;
		overflow: hidden;
	}
	.scroll {
		display: flex;
		flex-direction: column;
		justify-content: space-between;
		align-items: center;
		width: 17px;
		height: 100%;
		padding: 5px 0;
		border: 1px solid #222;
		background: #484848;
		color: #7a7a7a;
	}
	.scroll .arrow {
		width: 9px;
		height: 5px;
	}
	.flip {
		transform: rotate(180deg);
	}
	.scan {
		margin: 7px 0 0;
		padding: 0 0 0 9px;
	}
	.scan label {
		display: flex;
		align-items: center;
		gap: 3px;
		width: 51px;
	}
	.scan .field {
		flex: 0 0 250px;
		height: 22px;
	}
	.scan button {
		padding: 0 2px;
	}

	/* Informationen */
	.right {
		flex: 1;
		min-width: 0;
		margin-right: 5px;
	}
	.infotabs {
		display: flex;
		align-items: flex-end;
		gap: 1px;
		height: 24px;
		padding-left: 3px;
	}
	.infotabs button {
		display: flex;
		align-items: center;
		gap: 4px;
		height: 22px;
		padding: 0 8px;
		border: 1px solid #6e6e6e;
		border-bottom: 0;
		border-radius: 3px 3px 0 0;
		background: linear-gradient(#6c6c6c, #919191 30%, #6a6a6a 60%, #808080);
		color: #fff;
		font-weight: 700;
	}
	.infotabs .i16 {
		width: 15px;
		height: 15px;
	}
	.infotabs .active {
		position: relative;
		height: 24px;
		margin-bottom: -1px;
		border-color: #9a9a9a;
		background: #e5e5e5;
		color: #2f2f2f;
	}
	.info {
		display: flex;
		gap: 18px;
		height: 161px;
		padding-top: 9px;
		border: 1px solid #9f9f9f;
		box-shadow: 1px 1px 2px #aaa;
	}
	.infocol {
		display: grid;
		grid-template-columns: 87px 190px;
		column-gap: 6px;
		row-gap: 7px;
		align-items: center;
		align-content: start;
	}
	.second {
		grid-template-columns: 92px 235px;
		row-gap: 8px;
	}
	.infocol label {
		text-align: right;
		white-space: nowrap;
	}
	.status select {
		flex: 1;
		margin-left: 4px;
		appearance: none;
		opacity: 1;
		color: #000;
	}
	.pale {
		padding-right: 4px;
		color: #aaa;
	}
	.short {
		width: 78px;
	}
	.short input {
		padding-right: 2px;
		text-align: right;
	}
	.check {
		appearance: none;
		width: 18px;
		height: 18px;
		border: 2px solid #000;
		background: #e5e5e5;
	}

	/* Positionen */
	.grid {
		flex: 1;
		margin-top: 12px;
		padding: 1px 0 0;
		border: 1px solid #a5a5a5;
		background: #fff;
	}
	table {
		width: 100%;
		table-layout: fixed;
		border-collapse: separate;
		border-spacing: 0;
	}
	col.mark {
		width: 15px;
	}
	th,
	td {
		height: 19px;
		padding: 0 3px;
		line-height: 16px;
		font-weight: 400;
		text-align: left;
		white-space: nowrap;
		border-right: 1px solid #cdd6e4;
		border-bottom: 1px solid #cdd6e4;
	}
	th {
		border-color: #b5b5b5;
		border-bottom: 0;
		background: linear-gradient(#fdfdfd, #e9e9e9);
	}
	.r {
		text-align: right;
	}
	.b {
		font-weight: 700;
	}
	.sel td {
		height: 24px;
		border-top: 3px solid #696969;
		border-bottom: 4px solid #696969;
		background: #316ac5;
		color: #fff;
	}
	.sel td.edit {
		background: #fff;
		color: #000;
		vertical-align: top;
		border-left: 1px dotted #000;
		padding-left: 4px;
	}
	.edit input {
		display: block;
		width: 100%;
		height: 14px;
	}
	.new td {
		color: #000;
	}
	td.mark {
		padding: 0;
		text-align: center;
		background: #eee;
		font-size: 10px;
	}
	.sel td.mark {
		background: #696969;
		border-color: #696969;
		color: #fff;
		font-weight: 700;
	}
	.totals {
		display: flex;
		align-items: center;
		justify-content: flex-end;
		height: 34px;
		margin-top: 7px;
		padding-right: 6px;
		border: 1px solid #b8b8b8;
		border-radius: 2px;
	}
	.totals label {
		margin: 3px 6px 0 13px;
	}
	.totals input {
		width: 125px;
		height: 26px;
		padding: 0 3px;
		border: 1px solid #838383;
		background: #fff;
		color: #000;
		font-size: 16px;
		font-weight: 700;
		text-align: right;
	}
	.totals input.grey {
		background: #e5e5e5;
	}

	/* Statusleiste */
	.status-bar {
		display: flex;
		justify-content: flex-end;
		height: 24px;
		background: linear-gradient(#5a5c66, #40424b 8px, #27282c 9px, #303238 22px, #4a4c58);
		color: #fff;
	}
	.status-bar div {
		display: flex;
		align-items: center;
		gap: 4px;
		padding: 0 5px;
		border-left: 1px solid #333;
		background: linear-gradient(#8a8a8c, #6c6c6e 40%, #555557 45%, #7c7c7e);
	}
	.status-bar .login {
		gap: 2px;
		padding: 0 4px;
	}
	.grip {
		width: 12px;
		height: 12px;
		align-self: flex-end;
		margin-bottom: 2px;
	}
</style>
